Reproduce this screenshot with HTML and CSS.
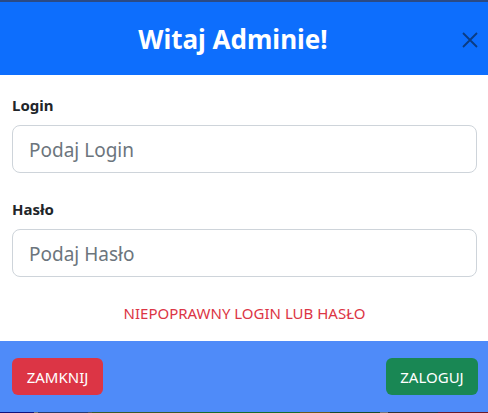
FILE: index.html
```html
<!DOCTYPE html>
<html lang="pl">
<head>
<meta charset="utf-8">
<link rel="stylesheet" href="styles.css">
</head>
<body>
<div class="topline"></div>
<div class="modal">
  <header class="modal-header">
    <h1 class="title">Witaj Adminie!</h1>
    <button class="close" aria-label="Zamknij">
      <svg width="16" height="16" viewBox="0 0 16 16"><path d="M1 1L15 15M15 1L1 15" stroke="currentColor" stroke-width="1.8"/></svg>
    </button>
  </header>
  <form class="modal-body">
    <div class="field">
      <label class="label">Login</label>
      <input class="input" type="text" placeholder="Podaj Login">
    </div>
    <div class="field">
      <label class="label">Hasło</label>
      <input class="input" type="password" placeholder="Podaj Hasło">
    </div>
    <p class="error">NIEPOPRAWNY LOGIN LUB HASŁO</p>
  </form>
  <footer class="modal-footer">
    <button class="btn btn-red">ZAMKNIJ</button>
    <button class="btn btn-green">ZALOGUJ</button>
  </footer>
</div>
<div class="bottomline"></div>
</body>
</html>
```
FILE: styles.css
```css
* { box-sizing: border-box; }
html, body { margin: 0; padding: 0; }
body {
  width: 488px;
  height: 413px;
  overflow: hidden;
  font-family: "Noto Sans", "Open Sans", sans-serif;
  background: #4f8bf9;
}
.topline { height: 2px; background: #2a4a86; }
.modal { display: flex; flex-direction: column; }
.modal-header {
  height: 73px;
  background: #0d6efd;
  display: flex;
  align-items: center;
  justify-content: center;
  padding-right: 22px;
  position: relative;
}
.title {
  margin: 0;
  color: #fff;
  font-size: 26px;
  font-weight: 700;
  line-height: 1;
}
.close {
  position: absolute;
  right: 10px;
  top: 30px;
  background: none;
  border: 0;
  padding: 0;
  color: #0b3c82;
  width: 16px;
  height: 16px;
  display: flex;
}
.modal-body {
  background: #fff;
  padding: 20px 11px 0 12px;
  height: 266px;
  margin: 0;
}
.field { display: flex; flex-direction: column; margin-bottom: 26px; }
.label {
  font-size: 15px;
  font-weight: 700;
  color: #212529;
  line-height: 20px;
  margin-bottom: 10px;
}
.input {
  height: 48px;
  border: 1px solid #ced4da;
  border-radius: 8px;
  padding: 2px 16px 0;
  font-family: inherit;
  font-size: 19px;
  color: #212529;
  background: #fff;
  outline: none;
}
.input::placeholder { color: #6c757d; }
.error {
  margin: 2px 0 0;
  text-align: center;
  color: #dc3545;
  font-size: 15px;
  line-height: 20px;
}
.modal-footer {
  height: 71px;
  display: flex;
  justify-content: space-between;
  align-items: flex-start;
  padding: 17px 10px 0 12px;
}
.btn {
  height: 37px;
  border: 0;
  border-radius: 6px;
  color: #fff;
  font-family: inherit;
  font-size: 15px;
  width: 91px;
  padding: 0;
}
.btn-red { background: #dc3545; }
.btn-green { background: #198754; width: 92px; }
.bottomline {
  height: 1px;
  background: linear-gradient(90deg, #12127a 0 34px, #777 34px 38px, #2a3a6a 38px 88px, #555 88px 92px, #3a5a2a 92px 200px, #1a6a2a 200px 300px, #6a5a1a 300px 330px, #1a4a2a 330px 380px, #777 380px 388px, #333 388px 438px, #6a1a2a 438px);
}
```
